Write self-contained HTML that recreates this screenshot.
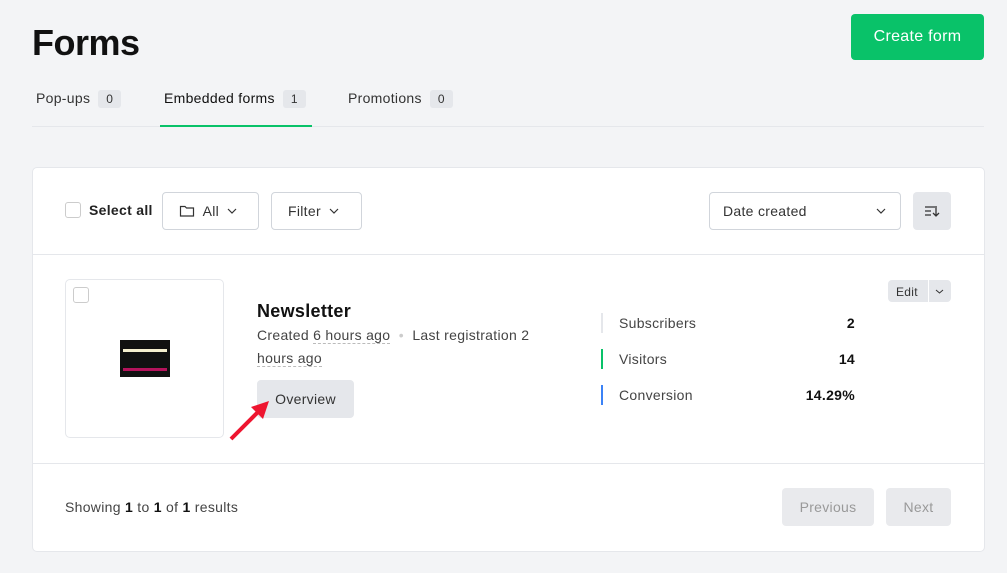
<!DOCTYPE html><html><head><style>
body{margin:0;background:#f3f4f6;font-family:"Liberation Sans",sans-serif;width:1007px;height:573px;position:relative;overflow:hidden;color:#111;letter-spacing:0.3px}
.a{position:absolute}
.badge{display:inline-block;background:#e5e7eb;font-size:12px;padding:2px 8px;border-radius:3px;margin-left:8px;color:#333}
.tab{font-size:14px;color:#333}
.btn{position:absolute;border:1px solid #d1d5db;border-radius:4px;background:#fff;font-size:14px;color:#333;box-sizing:border-box;display:flex;align-items:center}
.lbl{font-size:14px;color:#444}
.val{font-size:14px;font-weight:bold;text-align:right;width:80px}
.bar{position:absolute;width:2px;height:20px}
</style></head><body>
<div class="a" style="left:32px;top:22px;font-size:36px;font-weight:bold;letter-spacing:-0.5px">Forms</div>
<div class="a" style="left:851px;top:14px;width:133px;height:46px;background:#09c269;border-radius:4px;color:#fff;font-size:16px;display:flex;align-items:center;justify-content:center">Create form</div>
<div class="a tab" style="left:36px;top:90px">Pop-ups<span class="badge">0</span></div>
<div class="a tab" style="left:164px;top:90px;color:#111">Embedded forms<span class="badge">1</span></div>
<div class="a tab" style="left:348px;top:90px">Promotions<span class="badge">0</span></div>
<div class="a" style="left:32px;top:126px;width:952px;height:1px;background:#e5e7eb"></div>
<div class="a" style="left:160px;top:125px;width:152px;height:2px;background:#09c269"></div>
<div class="a" style="left:32px;top:167px;width:951px;height:383px;background:#fff;border:1px solid #e5e7eb;border-radius:5px"></div>
<div class="a" style="left:65px;top:202px;width:14px;height:14px;border:1px solid #ccc;border-radius:3px"></div>
<div class="a" style="left:89px;top:202px;font-size:14px;font-weight:bold;color:#222">Select all</div>
<div class="btn" style="left:162px;top:192px;width:97px;height:38px;padding-left:16px">
<svg width="16" height="14" viewBox="0 0 16 14"><path d="M1.5 2.5h4.5l1.5 1.5h7v8h-13z" fill="none" stroke="#333" stroke-width="1.2"/></svg>&nbsp; All &nbsp;<svg width="10" height="6"><path d="M1 1l4 4 4-4" fill="none" stroke="#333" stroke-width="1.2"/></svg></div>
<div class="btn" style="left:271px;top:192px;width:91px;height:38px;padding-left:16px">Filter &nbsp;<svg width="10" height="6"><path d="M1 1l4 4 4-4" fill="none" stroke="#333" stroke-width="1.2"/></svg></div>
<div class="btn" style="left:709px;top:192px;width:192px;height:38px;padding-left:13px">Date created<svg style="position:absolute;right:14px" width="10" height="6"><path d="M1 1l4 4 4-4" fill="none" stroke="#333" stroke-width="1.2"/></svg></div>
<div class="a" style="left:913px;top:192px;width:38px;height:38px;background:#e5e7eb;border-radius:4px"><svg width="38" height="38"><path d="M12 15h10M12 19h6M12 23h6M23 14v10M20 21l3 3 3-3" fill="none" stroke="#333" stroke-width="1.3"/></svg></div>
<div class="a" style="left:33px;top:254px;width:951px;height:1px;background:#e5e7eb"></div>
<div class="a" style="left:65px;top:279px;width:159px;height:159px;border:1px solid #e5e7eb;border-radius:5px;box-sizing:border-box"></div>
<div class="a" style="left:73px;top:287px;width:14px;height:14px;border:1px solid #ccc;border-radius:3px"></div>
<div class="a" style="left:120px;top:340px;width:50px;height:37px;background:#111"><div style="margin:9px 3px 0;height:3px;background:#f5efcf"></div><div style="margin:16px 3px 0;height:3px;background:#b5135c"></div></div>
<div class="a" style="left:257px;top:301px;font-size:18px;font-weight:bold">Newsletter</div>
<div class="a" style="left:257px;top:324px;width:300px;font-size:14px;color:#444;line-height:23px">Created <span style="border-bottom:1px dashed #bbb">6 hours ago</span> &nbsp;<span style="color:#ccc">•</span>&nbsp; Last registration 2 <span style="border-bottom:1px dashed #bbb">hours ago</span></div>
<div class="a" style="left:257px;top:380px;width:97px;height:38px;background:#e5e7eb;border-radius:4px;font-size:14px;color:#333;display:flex;align-items:center;justify-content:center">Overview</div>
<svg class="a" style="left:225px;top:395px" width="50" height="50"><path d="M6 44L38 12" stroke="#ee1530" stroke-width="4"/><path d="M44 6L26 12L38 24z" fill="#ee1530"/></svg>
<div class="a" style="left:888px;top:280px;width:63px;height:22px;background:#e5e7eb;border-radius:4px;font-size:12px;color:#333"><span style="position:absolute;left:8px;top:5px">Edit</span><div style="position:absolute;left:40px;top:0;width:1px;height:22px;background:#fff"></div><svg style="position:absolute;left:47px;top:9px" width="9" height="5"><path d="M1 1l3.5 3 3.5-3" fill="none" stroke="#333"/></svg></div>
<div class="bar" style="left:601px;top:313px;background:#e5e7eb"></div>
<div class="bar" style="left:601px;top:349px;background:#09c269"></div>
<div class="bar" style="left:601px;top:385px;background:#3b82f6"></div>
<div class="a lbl" style="left:619px;top:315px">Subscribers</div>
<div class="a lbl" style="left:619px;top:351px">Visitors</div>
<div class="a lbl" style="left:619px;top:387px">Conversion</div>
<div class="a val" style="left:775px;top:315px">2</div>
<div class="a val" style="left:775px;top:351px">14</div>
<div class="a val" style="left:775px;top:387px">14.29%</div>
<div class="a" style="left:33px;top:463px;width:951px;height:1px;background:#e5e7eb"></div>
<div class="a" style="left:65px;top:499px;font-size:14px;color:#444">Showing <b style="color:#111">1</b> to <b style="color:#111">1</b> of <b style="color:#111">1</b> results</div>
<div class="a" style="left:782px;top:488px;width:92px;height:38px;background:#e9eaed;border-radius:4px;color:#999;font-size:14px;display:flex;align-items:center;justify-content:center">Previous</div>
<div class="a" style="left:886px;top:488px;width:65px;height:38px;background:#e9eaed;border-radius:4px;color:#999;font-size:14px;display:flex;align-items:center;justify-content:center">Next</div>
</body></html>
